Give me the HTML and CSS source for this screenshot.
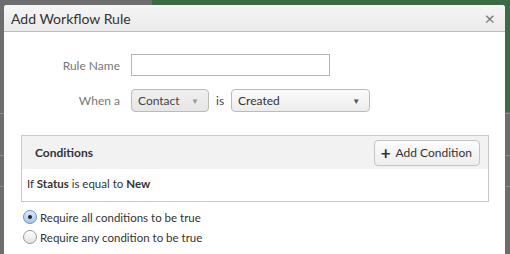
FILE: index.html
```html
<!DOCTYPE html>
<html lang="en">
<head>
    <meta charset="UTF-8">
    <title>Add Workflow Rule</title>
    <link rel="stylesheet" href="styles.css">
</head>
<body>
    <div class="dialog">
        <div class="dialog-header">
            <h1>Add Workflow Rule</h1>
            <span class="close">&times;</span>
        </div>

        <div class="dialog-body">
            <div class="form-grid">
                <label class="field-label">Rule Name</label>
                <div class="field"><input type="text" class="text-input"></div>

                <label class="field-label">When a</label>
                <div class="field">
                    <div class="select select-disabled select-object">Contact <span class="arrow">&#9660;</span></div>
                    <span class="is">is</span>
                    <div class="select select-event">Created <span class="arrow">&#9660;</span></div>
                </div>
            </div>

            <div class="conditions">
                <div class="conditions-header">
                    <h2>Conditions</h2>
                    <button class="add-btn"><span class="plus">+</span> Add Condition</button>
                </div>
                <div class="conditions-body">
                    If <b>Status</b> is equal to <b>New</b>
                </div>
            </div>

            <div class="match-options">
                <label class="radio"><span class="radio-dot checked"></span>Require all conditions to be true</label>
                <label class="radio"><span class="radio-dot"></span>Require any condition to be true</label>
            </div>
        </div>
    </div>
</body>
</html>
```

FILE: styles.css
```css
body {
    margin: 0;
    height: 254px;
    overflow: hidden;
    font-family: 'Lato', 'Open Sans', sans-serif;
    background-color: #6d6d6d;
    background-image:
        linear-gradient(#3b6b44, #3b6b44),
        linear-gradient(#8a8a8a, #8a8a8a),
        linear-gradient(#8a8a8a, #8a8a8a),
        linear-gradient(#8a8a8a, #8a8a8a);
    background-repeat: no-repeat;
    background-position: 152px 0, 0 113px, 0 155px, 0 186px;
    background-size: 358px 112px, 100% 1px, 100% 1px, 100% 1px;
}

.dialog {
    margin: 5px 0 0 4px;
    width: 501px;
    height: 249px;
    background-color: #ffffff;
    border-radius: 3px 3px 0 0;
}

.dialog-header {
    height: 26px;
    display: flex;
    align-items: center;
    justify-content: space-between;
    padding: 0 10px 0 7px;
    background: linear-gradient(#f5f5f5, #ebebeb);
    border-bottom: 1px solid #bdbdbd;
    border-radius: 3px 3px 0 0;
}

.dialog-header h1 {
    margin: 0;
    font-size: 14px;
    font-weight: normal;
    color: #333;
}

.close {
    font-size: 18px;
    color: #777;
    line-height: 1;
}

.dialog-body {
    padding: 22px 16px 0 17px;
}

.form-grid {
    display: grid;
    grid-template-columns: 99px auto;
    column-gap: 11px;
    row-gap: 13px;
    align-items: center;
    margin-left: -17px;
    padding-left: 17px;
}

.field-label {
    text-align: right;
    font-size: 12px;
    color: #777;
}

.field {
    display: flex;
    align-items: center;
}

.text-input {
    width: 199px;
    height: 22px;
    box-sizing: border-box;
    border: 1px solid #b5b5b5;
    margin: 0;
    padding: 0 4px;
}

.select {
    height: 23px;
    box-sizing: border-box;
    display: flex;
    align-items: center;
    justify-content: space-between;
    padding: 0 9px 0 6px;
    border: 1px solid #bbb;
    border-radius: 4px;
    font-size: 12px;
    color: #333;
    background: linear-gradient(#fbfbfb, #ececec);
}

.select-disabled {
    color: #444;
    background: linear-gradient(#f0f0f0, #e6e6e6);
}

.select-object {
    width: 78px;
}

.select-event {
    width: 139px;
}

.arrow {
    font-size: 8px;
    color: #555;
}

.select-disabled .arrow {
    color: #999;
}

.is {
    font-size: 12px;
    color: #444;
    margin: 0 7px;
}

.conditions {
    margin-top: 23px;
    border: 1px solid #c9c9c9;
}

.conditions-header {
    height: 33px;
    display: flex;
    align-items: center;
    justify-content: space-between;
    padding: 0 8px 0 13px;
    background-color: #f2f2f2;
}

.conditions-header h2 {
    margin: 0;
    font-size: 12px;
    font-weight: bold;
    color: #333;
}

.add-btn {
    height: 26px;
    padding: 0 7px 0 6px;
    border: 1px solid #c4c4c4;
    border-radius: 4px;
    background: linear-gradient(#fcfcfc, #eeeeee);
    font-family: inherit;
    font-size: 12px;
    color: #333;
    display: flex;
    align-items: center;
}

.plus {
    font-size: 17px;
    font-weight: bold;
    margin-right: 5px;
    line-height: 1;
}

.conditions-body {
    height: 32px;
    line-height: 30px;
    padding-left: 5px;
    font-size: 11.5px;
    color: #333;
}

.match-options {
    margin-top: 8px;
    margin-left: 2px;
    display: flex;
    flex-direction: column;
    gap: 6px;
}

.radio {
    height: 14px;
    display: flex;
    align-items: center;
    font-size: 11.5px;
    color: #333;
}

.radio-dot {
    width: 12px;
    height: 12px;
    border: 1px solid #9a9a9a;
    border-radius: 50%;
    background: linear-gradient(#ffffff, #e2e2e2);
    margin-right: 3px;
    display: flex;
    align-items: center;
    justify-content: center;
}

.radio-dot.checked {
    border-color: #6a8fc4;
    background: linear-gradient(#dbe8fa, #a9c6ef);
}

.radio-dot.checked::after {
    content: "";
    width: 4px;
    height: 4px;
    border-radius: 50%;
    background-color: #222;
}
```
